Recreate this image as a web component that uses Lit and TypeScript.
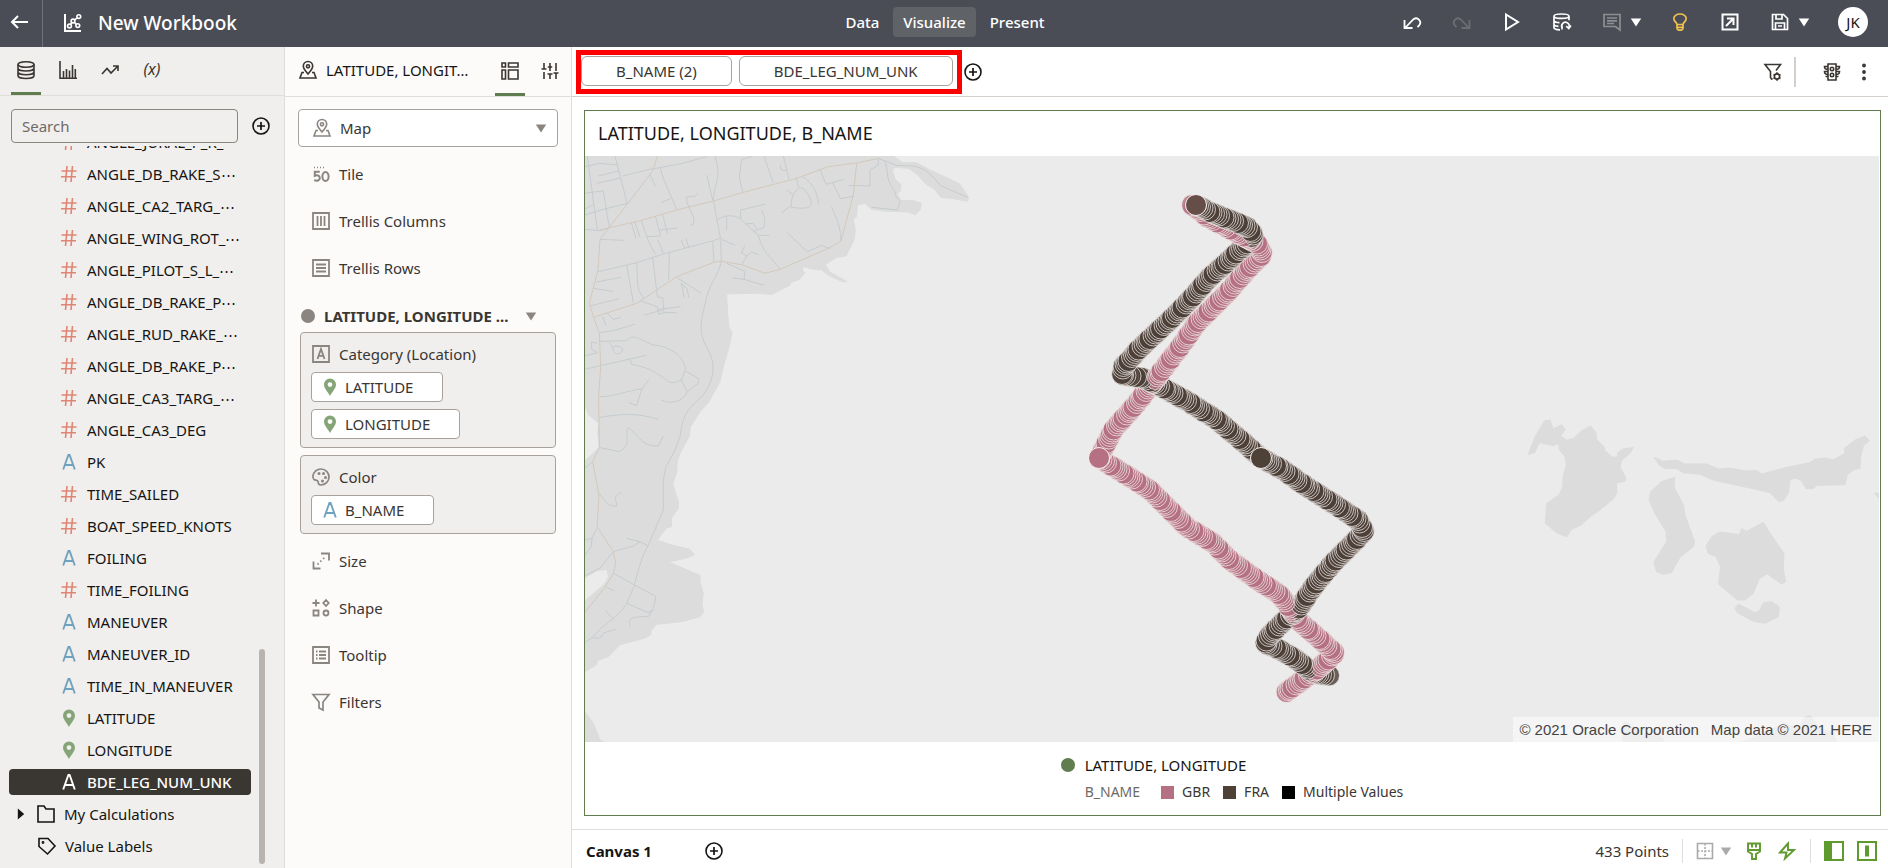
import { LitElement, html, svg, css, SVGTemplateResult } from "lit";
import { customElement, property } from "lit/decorators.js";
import { classMap } from "lit/directives/class-map.js";

const ICONS: Record<string, SVGTemplateResult> = {
  back: svg`<path d="M18 10H2M8 4 2 10l6 6" stroke-width="2"/>`,
  workbook: svg`<path d="M2 1v17h16" stroke-width="2"/><circle cx="6.5" cy="13" r="1.9"/><circle cx="10" cy="8" r="1.9"/><circle cx="14.8" cy="12.6" r="1.9"/><circle cx="15.8" cy="3.6" r="1.9"/><path d="m7.5 11.5 1.4-2M11.4 9.4l2 2M11.6 6.9l2.7-2.1"/>`,
  undo: svg`<path d="M3.5 15.5 11.5 7.2a4.2 4.2 0 0 1 5.6 6.2l-1.6 1.7M2.5 8v8h8" stroke-width="1.8"/>`,
  redo: svg`<path d="M16.5 15.5 8.5 7.2a4.2 4.2 0 0 0-5.6 6.2l1.6 1.7M17.5 8v8h-8" stroke-width="1.8"/>`,
  play: svg`<path d="M4 2.5v15L16 10z" stroke-width="2"/>`,
  refreshData: svg`<path d="M2 4.2C2 2.8 5.4 2 9.5 2S17 2.8 17 4.2 13.6 6.4 9.5 6.4 2 5.6 2 4.2zM2 4.2v11.5c0 1.2 2.5 2 6 2.1M17 4.200v4M2 8.500c0 1.200 2.200 2 5.500 2.200M2 12.300c0 1 1.800 1.800 4.500 2" stroke-width="1.700"/><path d="M10.500 16.500a3.800 3.800 0 1 1 6.500-1M10 14v3.500M19 13.500l-2.200 3-2.600-2.400" stroke-width="1.600"/>`,
  comment: svg`<path d="M2 2.500h16V18l-4.500-3.500H2zM5 6h10M5 8.800h10M5 11.500h7" stroke-width="1.700"/>`,
  bulb: svg`<path d="M7 12.500c0-2-3.200-3-3.200-6C3.800 4 6.500 2 10 2s6.200 2 6.200 4.500c0 3-3.200 4-3.200 6zM7 12.500v4.200l1.500 1.500h3l1.500-1.500v-4.200M7 15.400h6" stroke-width="1.700"/>`,
  expand: svg`<path d="M2.500 2.500h15v15h-15zM6 14l7-7M7 6.500h6.500V13" stroke-width="2"/>`,
  save: svg`<path d="M2.500 2.500h11l4 4v11h-15zM6 2.500v4.500h6V2.500M5.500 17.500V11h9v6.500M8 14h4" stroke-width="1.700"/>`,
  data: svg`<ellipse cx="10" cy="4.500" rx="8" ry="2.800"/><path d="M2 4.500v11.200c0 1.500 3.600 2.800 8 2.800s8-1.300 8-2.800V4.500M2 8.300C2 9.800 5.600 11 10 11s8-1.200 8-2.700M2 12c0 1.500 3.600 2.700 8 2.700s8-1.200 8-2.700"/>`,
  bars: svg`<path d="M2 1v17.300h17M5.500 17.500V11M8.500 17.500V9M11.500 17.500v-7M14.500 17.500V5M17.300 17.500V9"/>`,
  trend: svg`<path d="m2 14 5-5.500 4 4.500 7-7M13 6h5v5"/>`,
  plus: svg`<circle cx="10" cy="10" r="8"/><path d="M10 6v8M6 10h8" stroke-width="1.700"/>`,
  mapPin: svg`<path d="M10 14C7 10.500 5.300 8.500 5.300 6.200a4.700 4.700 0 0 1 9.400 0C14.700 8.500 13 10.500 10 14z"/><circle cx="10" cy="6.300" r="1.600"/><path d="M6 12.500H4L2 18h16l-2-5.500h-2"/>`,
  grammar: svg`<path d="M2 2h3.500v4H2zM8.500 2H18v4H8.500zM2 9h3.500v9H2zM8.500 9H18v9H8.500z"/>`,
  sliders: svg`<path d="M4 2v6M1.500 8h5M4 11v7M10 2v3.500M10 13v5M7.500 13h5M10 5.500V10M7.800 6h4.400M16 2v8M13.500 12h5M16 12v6"/>`,
  tile: svg`<path d="M3 3.500h1M6 3.500h1M9 3.500h1M12 3.500h1" stroke-width="1.500"/><path d="M8.800 7.800H3.800v4c2-1 5-.5 5 2.200 0 2.600-3 3.300-5.500 2" stroke-width="2"/><ellipse cx="14.500" cy="12.500" rx="3.100" ry="4.500" stroke-width="2"/>`,
  columns: svg`<path d="M2 2h16v16H2zM6.500 5v10M10 5v10M13.500 5v10" stroke-width="1.800"/>`,
  rows: svg`<path d="M2 2h16v16H2zM5 6.500h10M5 10h10M5 13.500h10" stroke-width="1.800"/>`,
  category: svg`<path d="M2 2h16v16H2zM6.500 15 10 5l3.500 10M7.800 11.800h4.500" stroke-width="1.800"/>`,
  palette: svg`<path d="M2 9a8 8 0 0 1 8-7 8 8 0 0 1 8 8c0 4.500-3.500 8-8.500 8-2.500 0-2-2-2.500-3.500-.6-1.700-2.500-1-4-2C2 11.800 1.800 10.200 2 9z" stroke-width="1.700"/><g class="solid"><circle cx="8" cy="6.500" r="1.500"/><circle cx="12.500" cy="6.500" r="1.500"/><circle cx="14.500" cy="10.500" r="1.500"/><circle cx="11.500" cy="14" r="1.500"/></g>`,
  size: svg`<path d="M10 2.500h8v7M2.500 10.500v7h7" stroke-width="1.800"/><path d="m6.500 13.500 8-8" stroke-dasharray="1.500 2.500" stroke-width="1.800"/>`,
  shape: svg`<path d="M5 1.500v7M1.500 5h7M15 2l2.700 3L15 8l-2.700-3zM2.500 12.500h5v5h-5z" stroke-width="1.800"/><circle cx="15" cy="15" r="2.500" stroke-width="1.800"/>`,
  tooltip: svg`<path d="M2 2h16v16H2zM5 6.500h1.500M8 6.500h7M5 10h1.500M8 10h7M5 13.500h1.500M8 13.500h7" stroke-width="1.800"/>`,
  filter: svg`<path d="M2 2.500h16L12 10v8l-4-2v-6z" stroke-width="1.700"/>`,
  filterCog: svg`<path d="M7.500 16V9.500L2 2.500h15.500l-4.500 6M7.500 16l2 1.500"/><circle cx="14" cy="14.500" r="2.600"/><path d="M14 10.300v1.600M14 17.100v1.600M10.500 12.500l1.300.8M16.200 15.700l1.300.8M17.500 12.500l-1.300.8M11.800 15.700l-1.300.8"/>`,
  traffic: svg`<path d="M6 2h8v16H6z"/><circle cx="10" cy="7" r="1.700"/><circle cx="10" cy="13" r="1.700"/><path d="M6 4.500H2.500c0 2 1.500 3 3.500 3M6 9.500H2.500c0 2 1.500 3 3.500 3M6 14.500H3.500M14 4.500h3.500c0 2-1.500 3-3.500 3M14 9.500h3.500c0 2-1.500 3-3.500 3M14 14.500h2.500"/>`,
  more: svg`<g class="solid"><circle cx="10" cy="3.500" r="1.900"/><circle cx="10" cy="10" r="1.900"/><circle cx="10" cy="16.500" r="1.900"/></g>`,
  folder: svg`<path d="M2 2h6l2 3h8v13H2z"/>`,
  tag: svg`<path d="M2 2.500h9l7 7.500-7.500 8L2 10.500z"/><circle cx="6" cy="6.500" r=".6"/>`,
  number: svg`<path d="M8 2 6.500 18M13.500 2 12 18M2.500 7h15M2 12.800h15" stroke-width="1.600"/>`,
  attribute: svg`<path d="M4.200 17.500 9.400 3h1.200l5.200 14.500M5.800 13h8.400" stroke-width="1.900"/>`,
  geo: svg`<path class="solid" fill-rule="evenodd" d="M10 1.500A6 6 0 0 0 4 7.500c0 4 4 7.500 6 11.500 2-4 6-7.500 6-11.500a6 6 0 0 0-6-6zm0 3.700a2.400 2.400 0 1 1 0 4.800 2.400 2.400 0 0 1 0-4.800z"/>`,
  caret: svg`<path class="solid" d="M3.500 5.500h13l-6.500 10z"/>`,
  caretRight: svg`<path class="solid" d="M6 3v14l8-7z"/>`,
  layout: svg`<path d="M2.500 2.500h15v15h-15z"/><path d="M2.500 10h15M10 2.500v15" stroke-dasharray="2 1.500"/>`,
  brush: svg`<path d="M4 2.500h12v8l-4 2.500v5H8v-5l-4-2.500zM4 9h12M8 2.500v4M12 2.500v4" stroke-width="1.900"/>`,
  bolt: svg`<path d="M11 2.500 3 11.500h6.500L8 17.500l9-8.500h-6z" stroke-width="1.900"/>`,
  panelLeft: svg`<path d="M1 1h18v18H1z" stroke-width="2"/><path class="solid" d="M1 1h7v18H1z"/>`,
  panelMid: svg`<path d="M1 1h18v18H1z" stroke-width="2"/><path class="solid" d="M8 4.500h4v11H8z"/>`,
};

@customElement("wb-icon")
class WbIcon extends LitElement {
  @property() name = "";
  static styles = css`
    :host { display: inline-flex; flex: none; width: 20px; height: 20px; }
    svg { width: 100%; height: 100%; fill: none; stroke: currentColor; stroke-width: 1.6; }
    .solid { fill: currentColor; stroke: none; }
  `;
  render() {
    return html`<svg viewBox="0 0 20 20" aria-hidden="true">${ICONS[this.name]}</svg>`;
  }
}

type Pt = [number, number];
const FRA: Pt[] = [[1196, 205], [1210, 212], [1230, 220], [1247, 227], [1253, 234], [1250, 241], [1237, 253], [1210, 277], [1187, 303], [1167, 323], [1140, 348], [1123, 367], [1122, 375], [1143, 378], [1167, 390], [1190, 403], [1217, 420], [1243, 442], [1261, 458], [1280, 468], [1307, 487], [1340, 508], [1358, 520], [1364, 531], [1353, 543], [1333, 563], [1313, 587], [1300, 607], [1283, 622], [1270, 635], [1265, 643], [1280, 650], [1297, 660], [1313, 673], [1331, 676]];
const GBR: Pt[] = [[1192, 205], [1207, 217], [1237, 233], [1257, 243], [1263, 254], [1247, 270], [1227, 293], [1197, 323], [1180, 347], [1157, 377], [1137, 403], [1113, 430], [1099, 458], [1123, 473], [1150, 490], [1170, 510], [1187, 527], [1213, 543], [1230, 560], [1253, 577], [1280, 595], [1300, 622], [1323, 642], [1335, 653], [1320, 667], [1300, 682], [1285, 693]];

/* Places positions along a route; the spacing cycles between short and long strides. */
const STRIDES = [2.2, 2.4, 2.6, 2.8, 5.2];
function positions(route: Pt[], boat: string) {
  const out: { x: number; y: number; boat: string }[] = [];
  let carry = 0;
  let n = 0;
  for (let i = 1; i < route.length; i++) {
    const [ax, ay] = route[i - 1];
    const [bx, by] = route[i];
    const len = Math.hypot(bx - ax, by - ay);
    let d = carry;
    while (d < len) {
      const t = d / len;
      out.push({ x: Math.round((ax + (bx - ax) * t) * 2) / 2, y: Math.round((ay + (by - ay) * t) * 2) / 2, boat });
      d += STRIDES[n++ % STRIDES.length];
    }
    carry = d - len;
  }
  return out;
}

const MARKS = [...positions(FRA, "fra"), ...positions(GBR, "gbr")].sort((a, b) => b.y - a.y);
const ENDS = [
  { x: 1099, y: 458, boat: "gbr" },
  { x: 1261, y: 458, boat: "fra" },
  { x: 1196, y: 205, boat: "mix" },
];

const LAND = "M14 18H940L968 38 1010 38 1050 60 1120 92 1140 103 1165 140 1163 154 1120 146 1082 142 1064 118 1040 104 1010 72 985 55 945 52 937 60 945 88 962 102 962 122 952 130 962 152 1000 152 1024 160 1020 180 1005 194 985 186 920 184 875 178 855 160 832 166 830 200 820 208 826 240 822 270 812 290 798 318 770 322 736 344 750 366 800 394 790 396 745 376 725 360 700 358 672 350 666 360 674 370 658 388 632 398 630 406 600 420 575 434 540 430 510 430 440 432 443 490 447 530 456 548 450 580 430 650 420 695 385 758 360 785 332 830 328 858 314 885 300 910 292 935 290 970 278 1000 285 1025 296 1055 295 1075 274 1105 275 1130 260 1134 232 1170 275 1185 330 1198 343 1215 320 1224 265 1236 360 1276 360 1295 370 1330 366 1365 371 1385 360 1400 305 1415 230 1423 214 1440 212 1455 195 1464 120 1484 85 1520 52 1532 50 1544 14 1565ZM14 1685 40 1720 60 1770 72 1776 14 1776Z";
const LAGOONS = "M14 770 25 795 55 820 52 850 57 890 40 908 14 932ZM14 1285 50 1264 80 1260 84 1280 72 1302 14 1352Z";
const MAIN_ROADS = "M232 18 220 60 140 165 60 268 54 360 28 460 40 500 58 548 62 650 56 740 58 893 38 935 52 1010 57 1040 51 1130 100 1205 107 1240 100 1270 76 1310 14 1388M60 240 180 212 290 180 400 153 490 127 650 85 745 50 830 39 895 25M40 502 170 460 290 380 405 336 425 334 485 344 555 370 600 358 745 295 783 273 820 135 830 40";
const MINOR_ROADS = "M22 18 52 240M105 18 142 162M14 50 60 40 115 45M55 78 118 62M50 100 122 84M128 78 210 58 300 42 380 20M14 195 70 178 142 160M14 130 70 122 75 155 88 232M14 238 60 242 90 232M14 178 40 164M210 74 227 110M240 52 252 90 290 178M242 158 272 146M405 18C425 90 405 90 400 150L422 268 424 335C415 380 385 400 376 460 360 520 355 550 385 600 410 650 400 690 370 735 320 780 310 790 300 860L285 900 258 950 250 990 250 1080 205 1185C180 1230 170 1280 162 1310L140 1360C110 1410 80 1410 40 1460L14 1478M380 75 398 150M353 130 344 140 320 140 320 155 342 205 340 222 330 227M515 20 485 28 478 80 488 127M552 18 580 100M610 18 627 88M600 45 605 60 620 62M648 82 656 112M656 114C670 110 680 125 692 148 700 175 680 178 635 172 628 150 645 122 656 114M620 120 640 134M632 168 604 188M668 80C700 100 712 130 716 162M720 58 738 103 793 88M758 98 782 146 822 138M805 106 870 108 870 60 895 45 895 25 950 46 1000 48C1040 55 1060 80 1080 106L1163 142M912 30C930 60 910 80 945 125 945 145 960 150 960 155L952 180 875 172M755 170C770 210 780 220 783 272M620 246 682 306 724 286 748 296M558 162 482 180 482 206M545 180 555 208 552 232 520 245M410 210C440 190 475 195 490 215L535 256 568 256M495 222 520 220 530 238M440 200V240M535 256C550 310 570 320 600 356M425 268 465 286M495 286 484 308 500 318 485 345M500 318 515 306 535 314M440 340 495 364 492 388 458 384M492 388 552 406M55 365 170 338 250 312 400 272 422 264M398 275 402 336M154 218 168 265M164 216 180 262M184 212C200 260 210 290 228 314M226 198 242 258 200 260M248 194 263 252M240 240 292 234M234 270 250 310M303 270 315 296M318 264 326 292M218 322 232 440 248 444 252 488 235 492 232 470 180 452M248 480 192 495M252 488 290 488M235 478 302 470M268 308 266 390M140 344 160 460M170 338C175 390 165 410 190 444M290 382 364 430M303 398 306 408 312 444M304 400 322 418 326 442M50 396 124 382M40 415 98 424M30 468 118 446M68 500 78 526M82 490 100 508 122 502M60 548 100 542 166 522M60 574 140 572C160 550 170 565 220 585 290 590 320 640 315 662L356 686 354 700 322 725 304 690 315 662M304 690 285 697C255 705 250 660 155 643L150 628M14 658 198 616M86 574 98 592M98 592C105 585 128 590 128 600 120 618 98 615 98 592M14 618 52 608 35 598 34 576 52 580M322 725C310 755 270 765 244 750M58 740C100 740 130 725 186 716L206 690M186 716 170 767 146 758M58 802C130 790 180 790 235 808M145 832C130 860 160 880 118 905L60 893M145 832C180 860 185 890 235 888L250 858M60 268 132 271M14 955 38 935M57 1030C80 1060 85 1070 110 1068 110 1050 95 1040 125 1027M14 1170 36 1165 52 1132M36 1165 34 1190 14 1216M14 1278 60 1254 100 1205 160 1188 180 1175 205 1188M180 1175 140 1165M100 1270 228 1340 220 1375 205 1400C170 1400 135 1400 152 1430M140 1360 205 1388 220 1380M76 1310 102 1322M76 1380 100 1408M40 1464 60 1464 72 1448 108 1438";
const ISLANDS = "M134 62 150 60 160 86 185 74 196 88 182 108 200 120 220 116 245 92 272 78 288 98 290 118 312 140 315 152 338 172 355 170 352 158 370 146 400 143 388 162 366 180 360 200 378 235 375 244 350 248 350 280 342 295 300 330 270 350 245 374 215 388 200 411 170 398 136 370 140 310 178 284 188 260 190 225 199 195 195 170 178 150 176 130 160 137 118 128 104 158 85 163 105 110ZM462 172 490 184 530 180 555 192 620 192 655 207 685 204 740 213 770 211 785 222 860 202 930 188 945 178 975 174 1000 180 1035 160 1032 146 1065 120 1095 108 1108 122 1090 138 1082 170 1080 205 1060 210 1042 224 1035 254 950 256 940 266 918 266 905 242 885 234 870 240 865 280 850 302 835 304 810 278 740 262 645 242 600 223 550 218 530 206 495 206 478 195ZM525 232 522 260 550 315 555 345 584 425 580 440 540 472 515 518 490 523 470 515 461 487 500 425 498 395 465 340 447 300 452 275 485 245ZM618 438 635 410 660 396 718 404 725 386 740 394 790 367 810 400 852 460 850 510 857 545 845 552 802 522 778 535 760 580 735 600 712 600 655 552 662 500 648 470 625 460ZM705 625 715 612 765 638 778 632 790 608 815 605 838 620 835 650 795 670 760 664 712 638ZM1122 280H1137V294ZM369 1026V1005L372 965 385 970 410 985 430 1008 480 1006 495 1026ZM725 1026 770 1010 812 990 850 970 895 985 915 950 932 948 960 985 1000 1000 1010 1026Z";

@customElement("race-map")
class RaceMap extends LitElement {
  static styles = css`
    :host { display: flex; position: relative; min-height: 0; background: #ebebeb; overflow: hidden; }
    svg { width: 100%; height: 100%; position: absolute; inset: 0; }
    .land { fill: #dcdcdc; stroke: #dcdcdc; stroke-width: 3; stroke-linejoin: round; }
    .water { fill: #ebebeb; }
    .road { fill: none; stroke-width: 3; stroke-linejoin: round; }
    .main { stroke: #d3c9bc; }
    .minor { stroke: #c5cccf; }
    .mark { stroke: #f3eeec; stroke-width: 1; fill-opacity: 0.82; stroke-opacity: 0.75; }
    .end { stroke: #f6f1f0; stroke-width: 1; }
    .fra { fill: #4d4138; }
    .gbr { fill: #b57183; }
    .mix { fill: #654d48; }
    .credit { position: absolute; right: 0; bottom: 0; margin: 0; padding: 0 7px 0 6px; display: flex; gap: 12px;
      background: rgba(255, 255, 255, 0.5); color: #444; font: 15px/25px "Liberation Sans", Arial, sans-serif; }
  `;
  render() {
    return html`
      <svg viewBox="585 156 1294 586" preserveAspectRatio="xMidYMid slice" role="img" aria-label="Map of boat positions">
        <g transform="translate(580 150) scale(.33333)">
          <path class="land" d=${LAND} />
          <path class="water" d=${LAGOONS} />
          <path class="road minor" d=${MINOR_ROADS} />
          <path class="road main" d=${MAIN_ROADS} />
        </g>
        <g transform="translate(1500 400) scale(.33333)"><path class="land" d=${ISLANDS} /></g>
        ${MARKS.map((m) => svg`<circle class="mark ${m.boat}" cx=${m.x} cy=${m.y} r="10.5"/>`)}
        ${ENDS.map((m) => svg`<circle class="end ${m.boat}" cx=${m.x} cy=${m.y} r="10.5"/>`)}
      </svg>
      <p class="credit"><span>© 2021 Oracle Corporation</span><span>Map data © 2021 HERE</span></p>
    `;
  }
}

const COLUMNS: [string, string][] = [
  ["number", "ANGLE_JURAL_P_R_⋯"], ["number", "ANGLE_DB_RAKE_S⋯"], ["number", "ANGLE_CA2_TARG_⋯"],
  ["number", "ANGLE_WING_ROT_⋯"], ["number", "ANGLE_PILOT_S_L_⋯"], ["number", "ANGLE_DB_RAKE_P⋯"],
  ["number", "ANGLE_RUD_RAKE_⋯"], ["number", "ANGLE_DB_RAKE_P⋯"], ["number", "ANGLE_CA3_TARG_⋯"],
  ["number", "ANGLE_CA3_DEG"], ["attribute", "PK"], ["number", "TIME_SAILED"], ["number", "BOAT_SPEED_KNOTS"],
  ["attribute", "FOILING"], ["number", "TIME_FOILING"], ["attribute", "MANEUVER"], ["attribute", "MANEUVER_ID"],
  ["attribute", "TIME_IN_MANEUVER"], ["geo", "LATITUDE"], ["geo", "LONGITUDE"], ["attribute", "BDE_LEG_NUM_UNK"],
];

@customElement("app-root")
class AppRoot extends LitElement {
  static styles = css`
    :host { display: grid; grid-template-rows: 47px minmax(0, 1fr); height: 100vh; overflow: hidden;
      font: 15px/20px "Noto Sans", "Open Sans", sans-serif; color: #161513; background: #fff; }
    * { box-sizing: border-box; }
    button { font: inherit; color: inherit; background: none; border: 0; padding: 0; margin: 0; display: inline-flex; align-items: center; cursor: pointer; }
    ul { list-style: none; margin: 0; padding: 0; }
    h1, h2 { margin: 0; font-weight: 400; }

    .topbar { background: #4a4d55; color: #fff; display: grid; grid-template-columns: 1fr auto 1fr; align-items: center; }
    .brand { display: flex; align-items: center; height: 100%; }
    .back { height: 100%; width: 43px; padding-left: 10px; border-right: 1px solid #6f7278; padding-bottom: 3px; }
    .brand h1 { font-size: 19px; line-height: 24px; margin-left: 15px; padding-bottom: 2px; font-weight: 500; }
    .brand wb-icon.book { margin-left: 20px; margin-bottom: 2px; }
    .modes { display: flex; gap: 4px; padding: 0 0 3px 2px; }
    .modes button { height: 30px; padding: 0 10px; border-radius: 4px; font-weight: 500; }
    .modes .on { background: #5f6267; }
    .actions { display: flex; justify-content: flex-end; align-items: center; gap: 30px; padding: 0 20px 3px 0; }
    .pair { display: inline-flex; align-items: center; gap: 6px; }
    .actions .pair { margin-right: -4px; }
    .caret { width: 16px; height: 16px; }
    .dim { color: #6c6e72; }
    .faint { color: #8d8f92; }
    .gold { color: #f0c14f; }
    .avatar { width: 30px; height: 30px; border-radius: 50%; background: #fff; color: #161513; justify-content: center; }

    .body { display: grid; grid-template-columns: 285px 287px minmax(0, 1fr); min-height: 0; }
    .tabs { height: 49px; display: flex; border-bottom: 1px solid #e0dedb; align-items: stretch; }
    .tabs button { position: relative; width: 30px; justify-content: center; color: #3a3632; padding-bottom: 2px; }
    .tabs .on::after { content: ""; position: absolute; left: 0; right: 0; bottom: 0; height: 3px; background: #5f7d4f; }

    .data { background: #f0efed; border-right: 1px solid #e0dedb; display: flex; flex-direction: column; min-height: 0; }
    .data .tabs { padding-left: 11px; gap: 12px; }
    .tabs .fx { font-style: italic; font-size: 16px; padding-bottom: 4px; }
    .find { display: flex; gap: 13px; padding: 13px 13px 0 11px; height: 50px; flex: none; align-items: flex-start; }
    .find input { flex: 1; min-width: 0; height: 34px; border: 1px solid #8b8580; border-radius: 4px; background: transparent; padding: 0 10px; font: inherit; color: #161513; }
    .find input::placeholder { color: #6f6a65; opacity: 1; }
    .find button { height: 34px; }
    .scroll { flex: 1; min-height: 0; display: flex; overflow: hidden; }
    .tree { flex: 1; min-width: 0; display: flex; flex-direction: column; justify-content: flex-end; overflow: hidden; padding: 0 8px 6px 9px; }
    .tree li { flex: none; height: 32px; display: flex; align-items: center; }
    .row { width: 100%; height: 26px; border-radius: 4px; padding-left: 50px; gap: 8px; white-space: nowrap; }
    .row.on { background: #3a3631; color: #fff; font-weight: 500; }
    .row.folder { padding-left: 4px; }
    .row.label { padding-left: 28px; }
    .row .twist { width: 16px; height: 16px; margin-right: -1px; }
    .number { color: #e08572; }
    .attribute { color: #6fa3bd; }
    .geo { color: #85a578; }
    .on .attribute { color: #fff; }
    .thumb { width: 6px; height: 215px; border-radius: 3px; background: #bbb4ae; align-self: flex-end; margin: 0 19px 4px 0; flex: none; }

    .grammar { background: #fcfbfa; border-right: 1px solid #e0dedb; display: flex; flex-direction: column; color: #3a3632; }
    .head { height: 50px; border-bottom: 1px solid #e0dedb; padding: 0 6px 3px 13px; display: flex; align-items: center; gap: 8px; flex: none; }
    .head .name { flex: 1; color: #161513; white-space: nowrap; }
    .head .tabs { gap: 10px; border: 0; align-self: flex-start; }
    .fields { padding: 12px 13px 0; }
    .pick { display: flex; align-items: center; height: 38px; border: 1px solid #a9a29c; border-radius: 4px; background: #fff; padding: 0 8px 0 13px; gap: 8px; color: #8b8580; }
    .pick select { flex: 1; appearance: none; border: 0; background: none; font: inherit; color: #3a3632; padding: 0; height: 36px; }
    .upper { padding-top: 3px; }
    .slot { display: flex; align-items: center; gap: 8px; height: 47px; padding-left: 13px; width: 100%; }
    .slot wb-icon, .box wb-icon.kind { color: #8b8580; }
    .layer { display: flex; align-items: center; height: 41px; gap: 9px; padding: 8px 0 0 3px; font-weight: 700; white-space: nowrap; width: 100%; }
    .layer .dot { width: 14px; height: 14px; border-radius: 50%; background: #8b8580; }
    .layer wb-icon { color: #8b8580; margin-left: 5px; }
    .boxes { display: grid; gap: 7px; padding: 0 2px 3px; }
    .box { border: 1px solid #a9a29c; border-radius: 4px; background: #f0efed; padding: 9px 10px 8px; display: flex; flex-direction: column; align-items: flex-start; gap: 7px; }
    .box .title { display: flex; align-items: center; gap: 8px; height: 23px; }
    .pill { height: 30px; border: 1px solid #a9a29c; border-radius: 4px; background: #fff; padding: 0 29px 0 8px; gap: 5px; }

    .main { display: grid; grid-template-rows: 50px minmax(0, 1fr) 39px; min-width: 0; min-height: 0; }
    .filters { border-bottom: 1px solid #d4cfca; display: flex; align-items: center; padding: 0 14px 0 4px; gap: 1px; }
    .marked { border: 5px solid #f00; padding: 1px 4px 3px 0; display: flex; gap: 7px; }
    .marked button { height: 30px; border: 1px solid #a9a29c; border-radius: 6px; padding: 0 34px; color: #3a3632; }
    .filters .right { margin-left: auto; display: flex; align-items: center; color: #3a3632; gap: 12px; }
    .rule { width: 1px; height: 30px; background: #d4cfca; }
    .filters .rule { width: 2px; margin: 0 14px 0 -1px; }
    .card { margin: 13px 7px 13px 12px; border: 1px solid #5f7d4f; display: grid; grid-template-rows: 45px minmax(0, 1fr) 73px; min-height: 0; padding-right: 1px; }
    .card h2 { font-size: 18px; line-height: 24px; padding: 10px 13px; }
    .legend { display: grid; grid-template-columns: auto auto; justify-content: center; align-content: start; column-gap: 10px; row-gap: 7px; padding-top: 13px; align-items: center; }
    .legend .dot { width: 14px; height: 14px; border-radius: 50%; background: #5f7d4f; }
    .keys { grid-column: 2; display: flex; align-items: center; font-size: 14px; gap: 13px; color: #3a3632; }
    .keys .by { color: #6f6a65; margin-right: 8px; }
    .key { display: inline-flex; align-items: center; gap: 8px; }
    .swatch { width: 13px; height: 13px; }
    .swatch.gbr { background: #b57183; }
    .swatch.fra { background: #4d4138; }
    .swatch.multi { background: #000; }

    .foot { border-top: 1px solid #e0dedb; display: flex; align-items: center; padding: 4px 11px 0 14px; gap: 52px; }
    .foot strong { font-weight: 700; }
    .status { margin-left: auto; display: flex; align-items: center; gap: 13px; color: #5f9a2e; }
    .status .count { color: #3a3632; }
    .status .grey { color: #aaa; gap: 3px; margin: 0 -3px 0 -1px; }
    .status .rule { height: 24px; background: #e0dedb; }
    .panels { display: flex; gap: 13px; }
  `;

  private tool(name: string, label: string, cls = "") {
    return html`<button class=${cls} aria-label=${label}><wb-icon name=${name}></wb-icon></button>`;
  }

  private slotRow(name: string, label: string) {
    return html`<button class="slot"><wb-icon name=${name}></wb-icon>${label}</button>`;
  }

  private pill(kind: string, label: string) {
    return html`<button class="pill"><wb-icon class=${kind} name=${kind}></wb-icon>${label}</button>`;
  }

  render() {
    return html`
      <header class="topbar">
        <div class="brand">
          <button class="back" aria-label="Back"><wb-icon name="back"></wb-icon></button>
          <wb-icon class="book" name="workbook"></wb-icon>
          <h1>New Workbook</h1>
        </div>
        <nav class="modes"><button>Data</button><button class="on">Visualize</button><button>Present</button></nav>
        <div class="actions">
          ${this.tool("undo", "Undo")} ${this.tool("redo", "Redo", "dim")} ${this.tool("play", "Preview")}
          ${this.tool("refreshData", "Refresh data")}
          <button class="pair" aria-label="Comments"><wb-icon class="faint" name="comment"></wb-icon><wb-icon class="caret" name="caret"></wb-icon></button>
          ${this.tool("bulb", "Insights", "gold")} ${this.tool("expand", "Export")}
          <button class="pair" aria-label="Save"><wb-icon name="save"></wb-icon><wb-icon class="caret" name="caret"></wb-icon></button>
          <button class="avatar">JK</button>
        </div>
      </header>
      <div class="body">
        <aside class="data">
          <div class="tabs">
            ${this.tool("data", "Data", "on")} ${this.tool("bars", "Visualizations")} ${this.tool("trend", "Analytics")}
            <button class="fx">(x)</button>
          </div>
          <div class="find">
            <input type="search" placeholder="Search" aria-label="Search" />
            ${this.tool("plus", "Add data")}
          </div>
          <div class="scroll">
            <ul class="tree">
              ${COLUMNS.map(([kind, name], i) => html`<li>
                <button class=${classMap({ row: true, on: i === COLUMNS.length - 1 })}><wb-icon class=${kind} name=${kind}></wb-icon>${name}</button>
              </li>`)}
              <li><button class="row folder"><wb-icon class="twist" name="caretRight"></wb-icon><wb-icon name="folder"></wb-icon>My Calculations</button></li>
              <li><button class="row label"><wb-icon name="tag"></wb-icon>Value Labels</button></li>
            </ul>
            <div class="thumb"></div>
          </div>
        </aside>
        <section class="grammar">
          <div class="head">
            <wb-icon name="mapPin"></wb-icon><span class="name">LATITUDE, LONGIT…</span>
            <div class="tabs">${this.tool("grammar", "Grammar", "on")} ${this.tool("sliders", "Properties")}</div>
          </div>
          <div class="fields">
            <label class="pick"><wb-icon name="mapPin"></wb-icon>
              <select aria-label="Visualization type"><option>Map</option></select>
              <wb-icon class="caret" name="caret"></wb-icon></label>
            <div class="upper">
              ${this.slotRow("tile", "Tile")} ${this.slotRow("columns", "Trellis Columns")} ${this.slotRow("rows", "Trellis Rows")}
            </div>
            <button class="layer"><span class="dot"></span>LATITUDE, LONGITUDE ...<wb-icon class="caret" name="caret"></wb-icon></button>
            <div class="boxes">
              <div class="box">
                <span class="title"><wb-icon class="kind" name="category"></wb-icon>Category (Location)</span>
                ${this.pill("geo", "LATITUDE")} ${this.pill("geo", "LONGITUDE")}
              </div>
              <div class="box">
                <span class="title"><wb-icon class="kind" name="palette"></wb-icon>Color</span>
                ${this.pill("attribute", "B_NAME")}
              </div>
            </div>
            ${this.slotRow("size", "Size")} ${this.slotRow("shape", "Shape")} ${this.slotRow("tooltip", "Tooltip")} ${this.slotRow("filter", "Filters")}
          </div>
        </section>
        <main class="main">
          <div class="filters">
            <div class="marked"><button>B_NAME (2)</button><button>BDE_LEG_NUM_UNK</button></div>
            ${this.tool("plus", "Add filter")}
            <div class="right">
              ${this.tool("filterCog", "Filter options")}<span class="rule"></span>${this.tool("traffic", "Limit values")}${this.tool("more", "More")}
            </div>
          </div>
          <article class="card">
            <h2>LATITUDE, LONGITUDE, B_NAME</h2>
            <race-map></race-map>
            <div class="legend">
              <span class="dot"></span><span>LATITUDE, LONGITUDE</span>
              <div class="keys">
                <span class="by">B_NAME</span>
                <span class="key"><span class="swatch gbr"></span>GBR</span>
                <span class="key"><span class="swatch fra"></span>FRA</span>
                <span class="key"><span class="swatch multi"></span>Multiple Values</span>
              </div>
            </div>
          </article>
          <footer class="foot">
            <strong>Canvas 1</strong>
            ${this.tool("plus", "Add canvas")}
            <div class="status">
              <span class="count">433 Points</span><span class="rule"></span>
              <button class="grey" aria-label="Layout"><wb-icon name="layout"></wb-icon><wb-icon class="caret" name="caret"></wb-icon></button>
              ${this.tool("brush", "Brushing")} ${this.tool("bolt", "Auto apply")}
              <span class="rule"></span>
              <span class="panels">${this.tool("panelLeft", "Data panel")}${this.tool("panelMid", "Grammar panel")}</span>
            </div>
          </footer>
        </main>
      </div>
    `;
  }
}
